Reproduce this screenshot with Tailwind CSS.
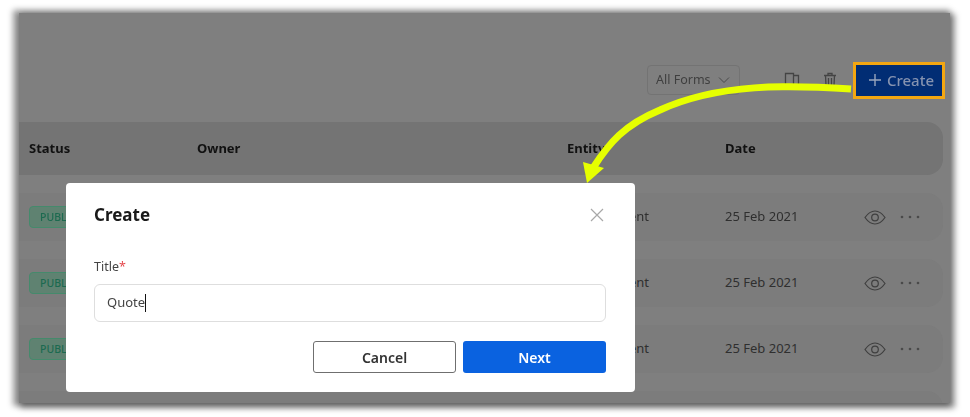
<!DOCTYPE html>
<html lang="en">

<head>
    <meta charset="UTF-8" />
    <meta name="viewport" content="width=device-width, initial-scale=1.0" />
    <title>Forms</title>
    <script src="https://cdn.jsdelivr.net/npm/@tailwindcss/browser@4"></script>
</head>

<body class="bg-white h-[417px] overflow-hidden font-['Noto_Sans',sans-serif]">
    <div class="pt-[13px] pl-[19px]">
        <!-- dimmed page -->
        <div class="relative w-[931px] h-[390px] bg-[#7f7f7f] shadow-[-3px_0_6px_3px_rgba(0,0,0,0.4),3px_3px_6px_2px_rgba(0,0,0,0.4)]">
            <div class="h-full overflow-hidden flex flex-col blur-[0.5px]">

                <!-- toolbar -->
                <div class="flex items-center justify-end h-[109px] pt-[25px] pr-[5px] shrink-0">
                    <div class="flex items-center justify-between w-[93px] h-[30px] border border-[#737373] rounded px-2 text-[12.500px] text-[#3f3f3f]">
                        <span>All Forms</span>
                        <svg class="w-[14px] h-[14px]" viewBox="0 0 14 14" fill="none" stroke="#4a4a4a" stroke-width="1"><path d="M2 4.500l5 5 5-5" /></svg>
                    </div>
                    <svg class="w-[16px] h-[17px] ml-[44px]" viewBox="0 0 16 17" fill="none" stroke="#444444" stroke-width="1.300"><path d="M1.500 16V1.500h8V16zM9.500 3.500h5V16h-5" /></svg>
                    <svg class="w-[14px] h-[16px] ml-[23px]" viewBox="0 0 14 16" fill="none" stroke="#444444" stroke-width="1.300"><path d="M1 3.500h12M5 3.500V1.500h4v2M2.500 3.500l.6 11.500h7.800l.6-11.500M5.500 6v7M8.500 6v7" /></svg>
                    <div class="flex items-center justify-center gap-[5px] w-[92px] h-[37px] ml-[16px] pl-[4px] bg-[#012d74] border-[3px] border-[#f3a712] text-[15px] font-medium text-[#8593b0]">
                        <svg class="w-[14px] h-[14px]" viewBox="0 0 14 14" fill="none" stroke="#98a5bd" stroke-width="1.400"><path d="M7 1v12M1 7h12" /></svg>
                        <span>Create</span>
                    </div>
                </div>

                <!-- table head -->
                <div class="grid grid-cols-[168px_370px_158px_1fr] items-center h-[53px] w-[924px] shrink-0 pl-[10px] bg-[#747474] rounded-r-2xl text-[13px] font-bold text-[#111111]">
                    <span>Status</span>
                    <span>Owner</span>
                    <span>Entity</span>
                    <span>Date</span>
                </div>

                <!-- rows -->
                <div class="mt-[18px] flex flex-col gap-[18px] w-[924px]">
                    <div class="grid grid-cols-[168px_370px_158px_1fr] items-center h-[48px] shrink-0 pl-[10px] bg-[#7c7c7c] rounded-r-2xl text-[13px] text-[#2f2f2f]">
                        <span class="w-fit h-[22px] px-[10px] text-[10.500px] font-medium leading-[20px] text-[#1c6a50] bg-[#5f8271] border border-[#458a6c] rounded">PUBLISHED</span>
                        <span></span>
                        <span>Management</span>
                        <div class="flex items-center justify-between pr-[23px]">
                            <span>25 Feb 2021</span>
                            <div class="flex items-center gap-[14px]">
                                <svg class="w-[22px] h-[15px]" viewBox="0 0 22 15" fill="none" stroke="#3f3f3f" stroke-width="1.200"><path d="M1 7.500C4 3.200 7.200 1 11 1s7 2.200 10 6.500C18 11.800 14.800 14 11 14S4 11.800 1 7.500z" /><circle cx="11" cy="7.500" r="3.300" /></svg>
                                <svg class="w-[20px] h-[4px]" viewBox="0 0 20 4" fill="#4a4a4a"><circle cx="2" cy="2" r="1.300" /><circle cx="10" cy="2" r="1.300" /><circle cx="18" cy="2" r="1.300" /></svg>
                            </div>
                        </div>
                    </div>
                    <div class="grid grid-cols-[168px_370px_158px_1fr] items-center h-[48px] shrink-0 pl-[10px] bg-[#7c7c7c] rounded-r-2xl text-[13px] text-[#2f2f2f]">
                        <span class="w-fit h-[22px] px-[10px] text-[10.500px] font-medium leading-[20px] text-[#1c6a50] bg-[#5f8271] border border-[#458a6c] rounded">PUBLISHED</span>
                        <span></span>
                        <span>Management</span>
                        <div class="flex items-center justify-between pr-[23px]">
                            <span>25 Feb 2021</span>
                            <div class="flex items-center gap-[14px]">
                                <svg class="w-[22px] h-[15px]" viewBox="0 0 22 15" fill="none" stroke="#3f3f3f" stroke-width="1.200"><path d="M1 7.500C4 3.200 7.200 1 11 1s7 2.200 10 6.500C18 11.800 14.800 14 11 14S4 11.800 1 7.500z" /><circle cx="11" cy="7.500" r="3.300" /></svg>
                                <svg class="w-[20px] h-[4px]" viewBox="0 0 20 4" fill="#4a4a4a"><circle cx="2" cy="2" r="1.300" /><circle cx="10" cy="2" r="1.300" /><circle cx="18" cy="2" r="1.300" /></svg>
                            </div>
                        </div>
                    </div>
                    <div class="grid grid-cols-[168px_370px_158px_1fr] items-center h-[48px] shrink-0 pl-[10px] bg-[#7c7c7c] rounded-r-2xl text-[13px] text-[#2f2f2f]">
                        <span class="w-fit h-[22px] px-[10px] text-[10.500px] font-medium leading-[20px] text-[#1c6a50] bg-[#5f8271] border border-[#458a6c] rounded">PUBLISHED</span>
                        <span></span>
                        <span>Management</span>
                        <div class="flex items-center justify-between pr-[23px]">
                            <span>25 Feb 2021</span>
                            <div class="flex items-center gap-[14px]">
                                <svg class="w-[22px] h-[15px]" viewBox="0 0 22 15" fill="none" stroke="#3f3f3f" stroke-width="1.200"><path d="M1 7.500C4 3.200 7.200 1 11 1s7 2.200 10 6.500C18 11.800 14.800 14 11 14S4 11.800 1 7.500z" /><circle cx="11" cy="7.500" r="3.300" /></svg>
                                <svg class="w-[20px] h-[4px]" viewBox="0 0 20 4" fill="#4a4a4a"><circle cx="2" cy="2" r="1.300" /><circle cx="10" cy="2" r="1.300" /><circle cx="18" cy="2" r="1.300" /></svg>
                            </div>
                        </div>
                    </div>
                    <div class="h-[48px] shrink-0 bg-[#7c7c7c] rounded-r-2xl"></div>
                </div>
            </div>

            <!-- modal -->
            <div class="absolute left-[47px] top-[170px] w-[569px] h-[209px] bg-white rounded-sm pl-[28px] pr-[29px] blur-[0.4px]">
                <div class="flex items-center justify-between h-[64px]">
                    <h2 class="text-[17px] font-bold text-[#1a1a1a]">Create</h2>
                    <svg class="w-[14px] h-[14px] mr-[2px]" viewBox="0 0 14 14" fill="none" stroke="#a8a8a8" stroke-width="1.200"><path d="M1 1l12 12M13 1L1 13" /></svg>
                </div>
                <label class="block mt-[11px] text-[12.500px] leading-[18px] text-[#444444]">Title<span class="text-[#e5484d]">*</span></label>
                <div class="flex items-center h-[38px] mt-[8px] px-[12px] border border-[#dedede] rounded-md text-[13px] text-[#444444]">Quote<span class="w-px h-[18px] bg-[#111111]"></span></div>
                <div class="flex justify-end gap-[7px] mt-[19px]">
                    <button class="w-[143px] h-[32px] border border-[#6f6f6f] rounded-[3px] text-[14px] font-semibold text-[#333333]">Cancel</button>
                    <button class="w-[143px] h-[32px] bg-[#0a62e0] rounded-[3px] text-[14px] font-semibold text-white">Next</button>
                </div>
            </div>

            <!-- callout arrow -->
            <svg class="absolute left-0 top-0 w-[931px] h-[390px] pointer-events-none" viewBox="0 0 931 390" fill="none">
                <path d="M832 76C770 72 700 70 641 97C605 112 590 130 574 155" stroke="#e6ff00" stroke-width="7" />
                <path d="M568 170L585 155L564 149z" fill="#e6ff00" />
            </svg>
        </div>
    </div>
</body>

</html>
